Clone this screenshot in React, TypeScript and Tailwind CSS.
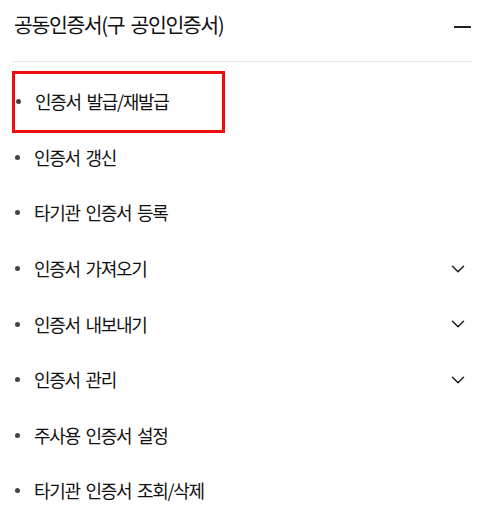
import { ChevronDown } from "lucide-react";

interface MenuItem {
  label: string;
  expandable?: boolean;
  focused?: boolean;
}

const items: MenuItem[] = [
  { label: "인증서 발급/재발급", focused: true },
  { label: "인증서 갱신" },
  { label: "타기관 인증서 등록" },
  { label: "인증서 가져오기", expandable: true },
  { label: "인증서 내보내기", expandable: true },
  { label: "인증서 관리", expandable: true },
  { label: "주사용 인증서 설정" },
  { label: "타기관 인증서 조회/삭제" },
];

export default function App() {
  return (
    <div
      className="w-[494px] h-[524px] bg-white text-[#111] overflow-hidden"
      style={{ fontFamily: '"Noto Sans CJK KR", "Noto Sans", sans-serif' }}
    >
      {/* 헤더 */}
      <div className="mx-[13px] w-[460px] h-[62px] flex items-start justify-between pt-[8px] border-b border-[#e6e6e6]">
        <span className="pl-[1px] text-[20.5px] leading-[32px] tracking-[-1.4px] [word-spacing:3px]">
          공동인증서(구 공인인증서)
        </span>
        <span className="w-[17px] h-[2px] bg-[#222] mr-[2px] mt-[18px]" />
      </div>

      <ul className="pt-[12px]">
        {items.map((item) => (
          <li key={item.label} className="h-[55.6px] flex items-center justify-between pr-[25px]">
            <div
              className={
                item.focused
                  ? "ml-[12px] w-[213px] h-[62px] border-[3px] border-[#f10d0d] flex items-center pl-[1px]"
                  : "ml-[15px] flex items-center"
              }
            >
              <span className="w-[5px] h-[5px] rounded-full bg-[#444]" />
              <span className="ml-[14px] text-[18px] tracking-[-1.3px] [word-spacing:3px]">{item.label}</span>
            </div>
            {item.expandable && <ChevronDown size={22} strokeWidth={1.7} className="text-[#222]" />}
          </li>
        ))}
      </ul>
    </div>
  );
}
